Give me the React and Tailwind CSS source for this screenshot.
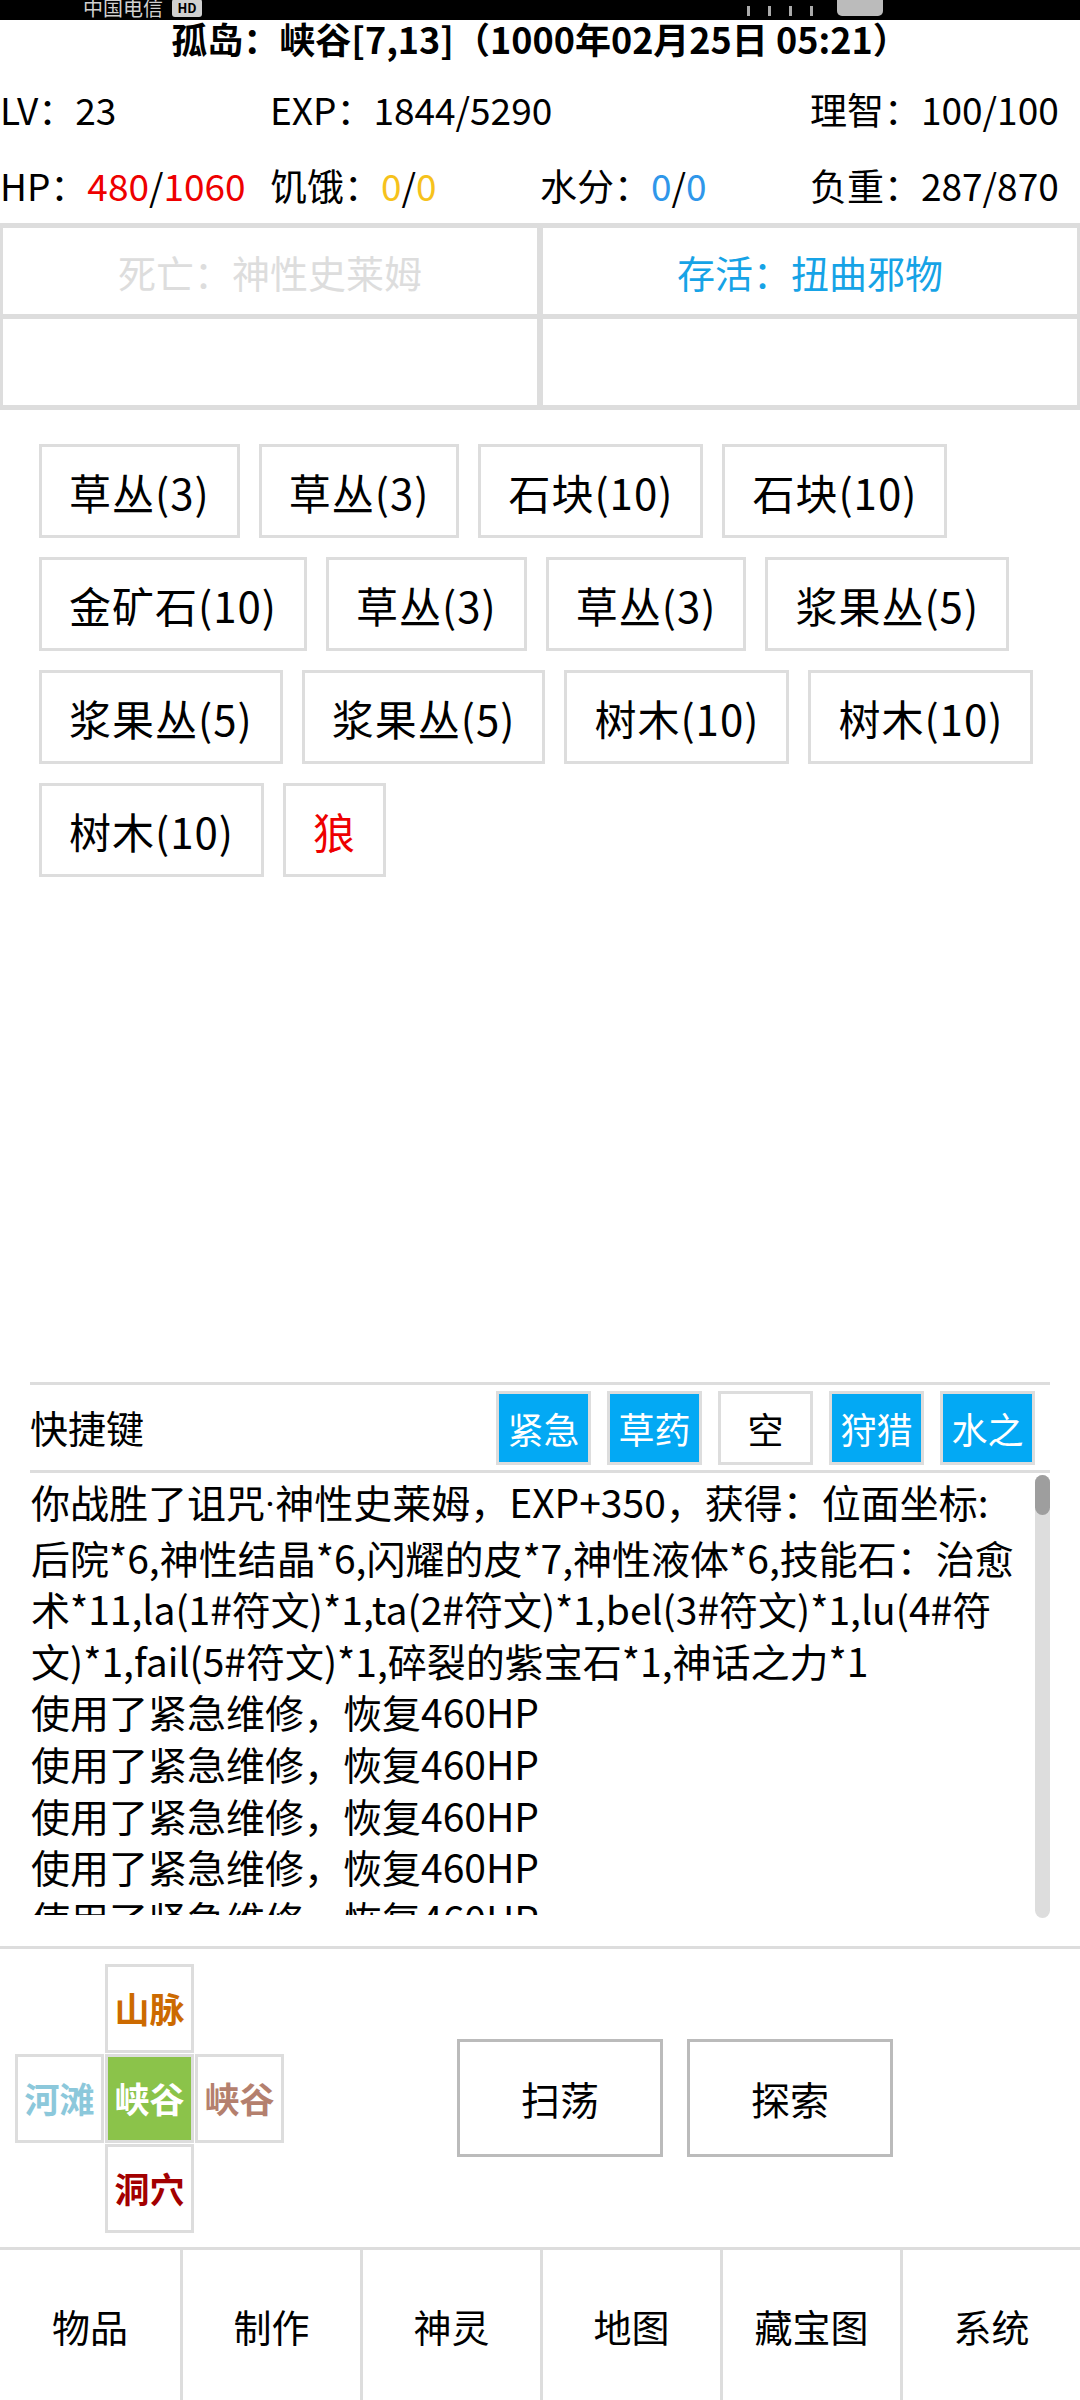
import React from "react";

const items = [
  { name: "草丛(3)" },
  { name: "草丛(3)" },
  { name: "石块(10)" },
  { name: "石块(10)" },
  { name: "金矿石(10)" },
  { name: "草丛(3)" },
  { name: "草丛(3)" },
  { name: "浆果丛(5)" },
  { name: "浆果丛(5)" },
  { name: "浆果丛(5)" },
  { name: "树木(10)" },
  { name: "树木(10)" },
  { name: "树木(10)" },
  { name: "狼", enemy: true },
];

const shortcuts = [
  { label: "紧急", on: true },
  { label: "草药", on: true },
  { label: "空", on: false },
  { label: "狩猎", on: true },
  { label: "水之", on: true },
];

const logLines = [
  "后院*6,神性结晶*6,闪耀的皮*7,神性液体*6,技能石：治愈",
  "术*11,la(1#符文)*1,ta(2#符文)*1,bel(3#符文)*1,lu(4#符",
  "文)*1,fail(5#符文)*1,碎裂的紫宝石*1,神话之力*1",
  "使用了紧急维修，恢复460HP",
  "使用了紧急维修，恢复460HP",
  "使用了紧急维修，恢复460HP",
  "使用了紧急维修，恢复460HP",
  "使用了紧急维修，恢复460HP",
];

const tabs = ["物品", "制作", "神灵", "地图", "藏宝图", "系统"];

function StatusBar() {
  return (
    <div className="h-[20px] bg-black overflow-hidden flex items-end text-[#d0d0d0]">
      <span className="ml-[83px] mb-[2px] text-[20px] leading-[20px]">中国电信</span>
      <span className="ml-[9px] mb-[3px] h-[18px] w-[30px] rounded-[3px] bg-[#d0d0d0] text-black text-[13px] leading-[18px] font-bold text-center">
        HD
      </span>
      <div className="flex-1" />
      <div className="mb-[4px] flex items-end gap-[18px] mr-[24px]">
        <span className="w-[3px] h-[10px] bg-[#aaa]" />
        <span className="w-[3px] h-[10px] bg-[#aaa]" />
        <span className="w-[3px] h-[10px] bg-[#aaa]" />
        <span className="w-[3px] h-[10px] bg-[#aaa]" />
      </div>
      <span className="mb-[4px] w-[46px] h-[20px] rounded-[5px] bg-[#bbb]" />
      <span className="w-[197px]" />
    </div>
  );
}

function DirCell({ label, color, active }) {
  if (!label) return <div className="w-[89px] h-[89px]" />;
  return (
    <div
      className={
        "w-[89px] h-[89px] border-[3px] border-[#dddddd] flex items-center justify-center text-[35px] font-bold " +
        (active ? "bg-[#8bc34a] text-white" : "bg-white")
      }
      style={active ? undefined : { color }}
    >
      {label}
    </div>
  );
}

export default function App() {
  return (
    <div className="w-[1080px] h-[2400px] bg-white flex flex-col overflow-hidden text-black font-['Noto_Sans_CJK_SC',sans-serif]">
      <StatusBar />

      <div className="h-[36px] leading-[36px] text-center text-[36px] font-bold whitespace-nowrap">
        孤岛：峡谷[7,13]（1000年02月25日 05:21）
      </div>

      <div className="grid grid-cols-4 pt-[15px] text-[37px] whitespace-nowrap">
        <div className="h-[78px] flex items-center">LV：23</div>
        <div className="h-[78px] flex items-center col-span-2">EXP：1844/5290</div>
        <div className="h-[78px] flex items-center">理智：100/100</div>
        <div className="h-[74px] flex items-center">
          HP：<span className="text-[#ee0000]">480</span>/<span className="text-[#ee0000]">1060</span>
        </div>
        <div className="h-[74px] flex items-center">
          饥饿：<span className="text-[#f6c21c]">0</span>/<span className="text-[#f6c21c]">0</span>
        </div>
        <div className="h-[74px] flex items-center">
          水分：<span className="text-[#2f97ea]">0</span>/<span className="text-[#2f97ea]">0</span>
        </div>
        <div className="h-[74px] flex items-center">负重：287/870</div>
      </div>

      <div className="grid grid-cols-2 gap-x-[6px] gap-y-[5px] px-[3px] py-[5px] bg-[#dddddd] text-[38px]">
        <div className="h-[86px] bg-white flex items-center justify-center text-[#dddddd]">死亡：神性史莱姆</div>
        <div className="h-[86px] bg-white flex items-center justify-center text-[#16a3e6]">存活：扭曲邪物</div>
        <div className="h-[86px] bg-white" />
        <div className="h-[86px] bg-white" />
      </div>

      <div className="flex flex-wrap gap-[19px] pl-[39px] pr-[30px] pt-[34px]">
        {items.map((item, i) => (
          <div
            key={i}
            className={
              "h-[94px] px-[27px] border-[3px] border-[#dddddd] flex items-center text-[42px] tracking-[1px] whitespace-nowrap " +
              (item.enemy ? "text-[#ee0000]" : "text-black")
            }
          >
            {item.name}
          </div>
        ))}
      </div>

      <div className="flex-1" />

      <div className="mx-[30px] border-t-[3px] border-[#dddddd] flex items-center pt-[6px] pb-[5px] pr-[15px]">
        <div className="flex-1 text-[38px] -mt-[4px]">快捷键</div>
        <div className="flex gap-[16px]">
          {shortcuts.map((s, i) => (
            <div
              key={i}
              className={
                "w-[95px] h-[74px] border-[3px] border-[#dddddd] flex items-center justify-center text-[36px] " +
                (s.on ? "bg-[#03a9f4] text-white" : "bg-white text-black")
              }
            >
              {s.label}
            </div>
          ))}
        </div>
      </div>

      <div className="mx-[30px] border-t-[3px] border-[#dddddd] h-[476px] flex">
        <div className="flex-1 h-[442px] overflow-hidden text-[39px] leading-[51.6px] pt-[3px] pl-[1px]">
          <div className="whitespace-nowrap">
            你战胜了诅咒<span className="font-['Roboto',sans-serif]">·</span>神性史莱姆，EXP+350，获得：位面坐标:
          </div>
          {logLines.map((line, i) => (
            <div key={i} className="whitespace-nowrap">
              {line}
            </div>
          ))}
        </div>
        <div className="w-[15px] h-[443px] mt-[2px] rounded-full bg-[#dddddd] flex flex-col">
          <div className="h-[40px] rounded-full bg-[#9e9e9e]" />
        </div>
      </div>

      <div className="border-t-[3px] border-[#dddddd] h-[301px] flex">
        <div className="pl-[15px] pt-[15px] grid grid-cols-[repeat(3,89px)] gap-[1px] content-start">
          <DirCell />
          <DirCell label="山脉" color="#cc6a00" />
          <DirCell />
          <DirCell label="河滩" color="#8cc8db" />
          <DirCell label="峡谷" active />
          <DirCell label="峡谷" color="#b4806e" />
          <DirCell />
          <DirCell label="洞穴" color="#a30000" />
          <DirCell />
        </div>
        <div className="flex-1 flex items-center justify-center gap-[24px] pr-[14px]">
          <div className="w-[206px] h-[118px] border-[3px] border-[#bbbbbb] flex items-center justify-center text-[39px]">扫荡</div>
          <div className="w-[206px] h-[118px] border-[3px] border-[#bbbbbb] flex items-center justify-center text-[39px]">探索</div>
        </div>
      </div>

      <div className="h-[153px] border-t-[3px] border-[#dddddd] grid grid-cols-6">
        {tabs.map((t, i) => (
          <div
            key={t}
            className={
              "flex items-center justify-center text-[38px] " + (i > 0 ? "border-l-[3px] border-[#dddddd]" : "")
            }
          >
            {t}
          </div>
        ))}
      </div>
    </div>
  );
}
